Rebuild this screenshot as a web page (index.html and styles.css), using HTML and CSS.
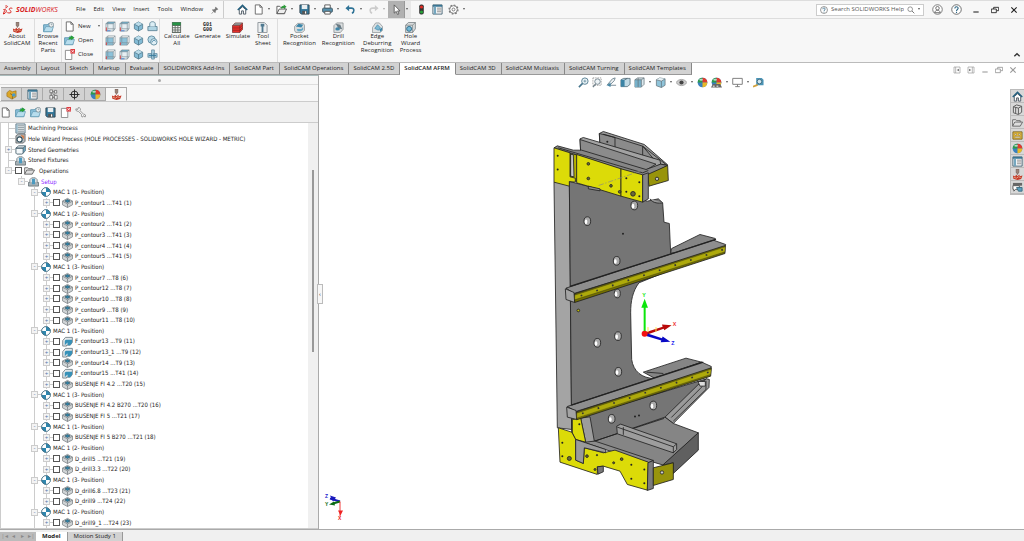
FILE: index.html
```html
<!DOCTYPE html>
<html lang="en">
<head>
  <meta charset="UTF-8">
  <title>SOLIDWORKS</title>
  <link rel="stylesheet" href="styles.css">
</head>
<body>
  <!-- icon set -->
  <svg class="defs" aria-hidden="true">
    <symbol id="home" viewBox="0 0 12 12"><path d="M2.5 6v5h2.500V7.500h2V11h2.500V6L6 3z" fill="#fff" stroke="#4a5660"/><path d="M.8 6.500L6 1.500l5.200 5" fill="none" stroke="#24607f" stroke-width="1.600"/></symbol>
    <symbol id="page" viewBox="0 0 12 12"><path d="M2.500 1h5l2.500 2.500V11H2.500z" fill="#fff" stroke="#666"/><path d="M7.500 1v2.500H10" fill="none" stroke="#666"/></symbol>
    <symbol id="open" viewBox="0 0 12 12"><path d="M1 10.500v-8h3l1 1.200h4.500V10.500z" fill="#fff" stroke="#555"/><path d="M1 10.500l2.500-5h8l-2.500 5z" fill="#eee" stroke="#555"/><path d="M5.500 5c0-2 1-3 3-3V.5L11.500 3 8.500 5.200V4C7 4 7 5 5.500 5z" fill="#2d9b3a"/></symbol>
    <symbol id="save" viewBox="0 0 12 12"><path d="M1 1h10v10H2.500L1 9.500z" fill="#34789b" stroke="#2f4450"/><path d="M3 1h6v4.500H3z" fill="#e9eef0"/><path d="M3.500 7.500h5V11h-5z" fill="#555"/><path d="M6.500 8h1.300v2.500H6.500z" fill="#fff"/></symbol>
    <symbol id="print" viewBox="0 0 12 12"><path d="M3 1h6v4H3z" fill="#fff" stroke="#555"/><rect x=".7" y="4.500" width="10.600" height="4.500" rx="1" fill="#5791ad" stroke="#3c5563"/><path d="M3 8h6v3H3z" fill="#fff" stroke="#555"/></symbol>
    <symbol id="undo" viewBox="0 0 12 12"><path d="M2 4.500h5c3.500 0 3.500 4.500.5 5.500" fill="none" stroke="currentColor" stroke-width="1.700"/><path d="M.5 4.500L4.500 1v7z" fill="currentColor"/></symbol>
    <symbol id="cursor" viewBox="0 0 12 12"><path d="M3.500 1v9l2.200-2 1.500 3.500 1.400-.7L7.200 7.500h2.600z" fill="#fff" stroke="#444" stroke-width=".8"/></symbol>
    <symbol id="light" viewBox="0 0 12 12"><rect x="3.500" y=".5" width="5" height="11" rx="2" fill="#333"/><circle cx="6" cy="3.300" r="1.700" fill="#e22b22"/><circle cx="6" cy="8.700" r="1.700" fill="#27a338"/></symbol>
    <symbol id="list" viewBox="0 0 12 12"><path d="M1 1h10v10H1z" fill="#fff" stroke="#446273"/><path d="M1 1h10v2H1z" fill="#397593"/><path d="M2 3h2.500v8H2z" fill="#75a7bf"/><path d="M5.500 4.500h4.500M5.500 6.500h4.500M5.500 8.500h4.500" stroke="#666" stroke-width=".8"/></symbol>
    <symbol id="gear" viewBox="0 0 12 12"><circle cx="6" cy="6" r="4.200" fill="#fff" stroke="#777"/><circle cx="6" cy="6" r="4.900" fill="none" stroke="#777" stroke-width="1.300" stroke-dasharray="1.900 1.900"/><circle cx="6" cy="6" r="1.600" fill="none" stroke="#777"/></symbol>
    <symbol id="search" viewBox="0 0 12 12"><circle cx="4.800" cy="4.800" r="3.500" fill="none" stroke="#666"/><path d="M7.500 7.500L11 11" stroke="#666" stroke-width="1.300"/></symbol>
    <symbol id="help" viewBox="0 0 12 12"><circle cx="6" cy="6" r="5.200" fill="#fff" stroke="#555" stroke-width=".9"/><path d="M4.200 4.800c0-2.400 3.600-2.300 3.600-.2C7.800 6 6 5.900 6 7.500M6 8.500v1.200" fill="none" stroke="#2d6583" stroke-width="1.200"/></symbol>
    <symbol id="user" viewBox="0 0 12 12"><circle cx="6" cy="6" r="5.200" fill="#fff" stroke="#666" stroke-width=".9"/><circle cx="6" cy="4.600" r="1.900" fill="none" stroke="#666"/><path d="M3 9.500c.3-3.500 5.700-3.500 6 0z" fill="none" stroke="#666"/></symbol>
    <symbol id="min" viewBox="0 0 12 12"><path d="M2 9h8" stroke="currentColor" stroke-width="1.600"/></symbol>
    <symbol id="restore" viewBox="0 0 12 12"><path d="M4 4.500V2h7.500v5H8.500M.5 4.500h7.500v5.500H.5z" fill="none" stroke="currentColor" stroke-width="1.300"/></symbol>
    <symbol id="close" viewBox="0 0 12 12"><path d="M2 2l8 8M10 2l-8 8" stroke="currentColor" stroke-width="1.700"/></symbol>
    <symbol id="dock" viewBox="0 0 12 12"><path d="M1.500 1.500h9v9h-9zM4 1.500v9" fill="none" stroke="#999"/><path d="M9 4v4L5.500 6z" fill="#777"/></symbol>
    <symbol id="pin" viewBox="0 0 12 12"><path d="M7 1l4 4-1 .8-1-.3-2 2 .2 2L6 10.500 1.500 6l1-1 2 .2 2-2L6.200 2z" fill="#777"/><path d="M4 8l-3 3.500" stroke="#777"/></symbol>
    <symbol id="cam" viewBox="0 0 12 12"><path d="M4.500 0h3v3.500L6 6 4.500 3.500z" fill="#9b8379" stroke="#5e4c46" stroke-width=".5"/><path d="M1 7l2.500 1.200L4.500 6 6 8l2-2 .5 1.800L11.500 7l-1.500 4-4 1-4.500-1.500z" fill="#c53827"/><path d="M2 9.200l3 .8 2-1.500 2.500.8" fill="none" stroke="#e8a487"/></symbol>
    <symbol id="folder" viewBox="0 0 12 12"><path d="M.7 10.500V3h4l1-1h4v8.500z" fill="#8fc5df" stroke="#5a93ae"/><path d="M.7 10.500L3 5h8.500l-2 5.500z" fill="#b7dded" stroke="#5a93ae" stroke-width=".7"/></symbol>
    <symbol id="recent" viewBox="0 0 12 12"><use href="#folder"/><circle cx="9" cy="3" r="2.600" fill="#eef3f5" stroke="#71838c" stroke-width=".8"/><path d="M9 1.500V3h1.300" fill="none" stroke="#71838c" stroke-width=".7"/></symbol>
    <symbol id="folderin" viewBox="0 0 12 12"><use href="#folder"/><path d="M5 5c0-2 1-3 2.500-3V.3L11.500 3 7.500 5.800V4.300C6.500 4.300 6 4.500 5 5z" fill="#29a039"/></symbol>
    <symbol id="pagex" viewBox="0 0 12 12"><path d="M1.500 1.500h7V11.500h-7z" fill="#fff" stroke="#888"/><path d="M7 0h5v5H7z" fill="#dd3d42"/><path d="M8.200 1.200l2.600 2.600M10.800 1.200L8.200 3.800" stroke="#fff" stroke-width=".8"/></symbol>
    <symbol id="pln" viewBox="0 0 12 12"><path d="M1 3L3 1h8v7.500L9 11H1z" fill="#e6eff3"/><path d="M1 3L3 1h8L9 3z" fill="#6eadc9"/><path d="M1 3h8v8H1zM1 3l2-2h8v7.500L9 11M9 3l2-2M3 1v7.500h8M3 8.500L1 11" fill="none" stroke="#7a8a93" stroke-width=".7"/><path d="M1.500 7v4" stroke="#d44"/><path d="M2 10.700h4" stroke="#477bcc"/></symbol>
    <symbol id="pln2" viewBox="0 0 12 12"><path d="M1 3h8v8H1z" fill="#8cc2da"/><path d="M1 3h8v8H1zM1 3l2-2h8v7.500L9 11M9 3l2-2M3 1v7.500h8M3 8.500L1 11" fill="none" stroke="#7a8a93" stroke-width=".7"/><path d="M1.500 8v3" stroke="#d44"/></symbol>
    <symbol id="iso" viewBox="0 0 12 12"><path d="M6 1l4.500 2.500v5L6 11 1.500 8.500v-5z" fill="#83bbd5" stroke="#4c7386" stroke-width=".8"/><path d="M1.500 3.500L6 6l4.500-2.500L6 1z" fill="#bbdcea"/><path d="M1.500 3.500L6 6l4.500-2.500M6 6v5" fill="none" stroke="#4c7386" stroke-width=".8"/></symbol>
    <symbol id="rot" viewBox="0 0 12 12"><circle cx="5" cy="5" r="4" fill="#b9dae8" stroke="#608da1"/><circle cx="7.500" cy="7.500" r="3.500" fill="#e2f0f6" stroke="#608da1"/><path d="M5.500 8c0-2 3-3 4-1" fill="none" stroke="#397b9c"/></symbol>
    <symbol id="norm" viewBox="0 0 12 12"><path d="M1 6h10v4.500H1z" fill="#b0d5e4" stroke="#60889a"/><path d="M3 6V3c0-3 6-3 6 0v3" fill="#dceef5" stroke="#60889a"/></symbol>
    <symbol id="link" viewBox="0 0 12 12"><path d="M1 5h4v4H1zM7 5h4v4H7zM5 1h3v10H5z" fill="#a6d0e2" stroke="#5a8399" stroke-width=".8"/><path d="M2 7h8" stroke="#34789b"/></symbol>
    <symbol id="calc" viewBox="0 0 12 12"><path d="M1 0h10v12H1z" fill="#646d66"/><path d="M1.500.5h9v3h-9z" fill="#279447"/><path d="M2 5h8M2 7.500h8M2 10h8" stroke="#fff" stroke-width="1.500" stroke-dasharray="2 1"/></symbol>
    <symbol id="sim" viewBox="0 0 12 12"><path d="M.5 4L3.500 1h8v7l-3 3.500h-8z" fill="#e8302c" stroke="#682623" stroke-width=".7"/><path d="M.5 4l3-3h8l-3 3z" fill="#8b8d8d"/><path d="M.5 4h8v7.500M8.500 4l3-3M.5 6.500h8l3-3M.5 9h8l3-3" fill="none" stroke="#791f1b" stroke-width=".6"/></symbol>
    <symbol id="sheet" viewBox="0 0 12 12"><path d="M1 .5h7l3 3v8H1z" fill="#eef0f1" stroke="#8c9499"/><path d="M4 2h4v3H7v6H5V5H4z" fill="#4f7990"/></symbol>
    <symbol id="pocket" viewBox="0 0 12 12"><path d="M.5 5L4 1.500h6l1.500 2V9L9 11.500H2L.5 9z" fill="#d9dcdd" stroke="#7d8588" stroke-width=".7"/><path d="M2 5l3-3 5 1-2 3z" fill="#3b86aa"/><path d="M3 7.500h5l2-2v3L7.500 10H4z" fill="#67a9c6"/></symbol>
    <symbol id="edge" viewBox="0 0 12 12"><path d="M.5 6L4 1h4l3.500 4v4L9 11.500H.5z" fill="#dfe2e3" stroke="#7d8588" stroke-width=".7"/><path d="M3 7l3-4 3 3-2 3z" fill="#7fb9d2" stroke="#3b86aa" stroke-width=".7"/><path d="M8 8l3-2v3l-2 2z" fill="#3b86aa"/></symbol>
    <symbol id="drill" viewBox="0 0 12 12"><path d="M1 4l3-3h7v7l-3 3.500H1z" fill="#dcdfe0" stroke="#80888b" stroke-width=".8"/><path d="M3 2l5 1 2 5-4-1z" fill="#697a83"/><ellipse cx="5" cy="7.500" rx="2.500" ry="1.700" fill="#4186a7"/></symbol>
    <symbol id="hole" viewBox="0 0 12 12"><path d="M.7 3.500l3-3h7.600v7l-3 4H.7z" fill="#d9dcdd" stroke="#6c7579" stroke-width=".8"/><path d="M.7 3.500h7.600v8M8.300 3.500l3-3" fill="none" stroke="#6c7579" stroke-width=".7"/><circle cx="4.500" cy="7.500" r="2.700" fill="#73b8d5" stroke="#2c6989"/></symbol>
    <symbol id="part" viewBox="0 0 12 12"><path d="M1 4l3-2.500 3 1.500 4-1v6.500L6.500 11 1 8z" fill="#dca728" stroke="#99701f" stroke-width=".7"/><path d="M4.500 5l2.500 1.500V11" fill="none" stroke="#8d681f"/><circle cx="8.500" cy="6.500" r="2" fill="#4a9aca"/></symbol>
    <symbol id="conf" viewBox="0 0 12 12"><path d="M2 1h3v3H2zM2 7h3v4H2zM7 1.500h2.500v3H7zM7 7h3v4H7z" fill="#eee" stroke="#666" stroke-width=".8"/><path d="M5 3h2M5 9h2M3.500 4v3M5 5l3 2" stroke="#555" stroke-width=".8"/></symbol>
    <symbol id="target" viewBox="0 0 12 12"><circle cx="6" cy="6" r="3.700" fill="none" stroke="#222"/><path d="M6 .5v11M.5 6h11" stroke="#222"/></symbol>
    <symbol id="ball" viewBox="0 0 12 12"><circle cx="6" cy="6" r="5.300" fill="#3a81bd"/><path d="M6 6V.7A5.300 5.300 0 0 0 .7 6z" fill="#2c9a4b"/><path d="M6 6V.7A5.300 5.300 0 0 1 11.300 6z" fill="#df3b2e"/><path d="M6 6h5.300A5.300 5.300 0 0 1 6 11.300z" fill="#e8b927"/><ellipse cx="4.500" cy="3" rx="2" ry="1.200" fill="#fff" opacity=".65"/></symbol>
    <symbol id="scene" viewBox="0 0 12 12"><use href="#ball"/><path d="M0 11.500l2-4h8l2 4z" fill="#666"/><path d="M2 10h8" stroke="#fff" stroke-dasharray="2 2"/></symbol>
    <symbol id="wrench" viewBox="0 0 12 12"><path d="M1 2l2 .7.500-2C6 .5 6.500 2.500 5.500 4l4 4c2-.5 2.500 1.500 1.500 3L9.200 9.500l-1 1.500C6.500 10.500 7 9 7.500 8.500l-4-4C2 5 .5 4 1 2z" fill="#f7f7f7" stroke="#777" stroke-width=".8"/></symbol>
    <symbol id="process" viewBox="0 0 12 12"><path d="M1 1h10v10H1z" fill="#e1e7ea" stroke="#5f7987"/><path d="M3 3h7M3 5h7M3 7h7M3 9h7" stroke="#8d999f"/><path d="M2.200 2v8" stroke="#74abc5"/></symbol>
    <symbol id="wizard" viewBox="0 0 12 12"><path d="M1 3l3-2h7v8l-2 2H1z" fill="#b3bcc0" stroke="#555" stroke-width=".8"/><circle cx="5" cy="7" r="2.800" fill="#fff" stroke="#2c4956" stroke-width="1.200"/><path d="M6 2l4 1v4L8 5z" fill="#d48150"/></symbol>
    <symbol id="geom" viewBox="0 0 12 12"><path d="M1 4.500L4 2h7.500L9 4.500zM1 4.500h8V10L7.500 11H2L1 10z" fill="#f4f8fa" stroke="#4e6672"/><path d="M9 4.500L11.500 2v5L9 10z" fill="#6da7c1" stroke="#4e6672" stroke-width=".7"/></symbol>
    <symbol id="fix" viewBox="0 0 12 12"><path d="M.5 7h11v4H.5z" fill="#a6b1b6" stroke="#5c686e" stroke-width=".8"/><path d="M2 7V4l2-2h4l2 2v3" fill="#dfe4e6" stroke="#5c686e" stroke-width=".8"/><path d="M4.300 3h3.400v6H4.300z" fill="#4b9ac0"/></symbol>
    <symbol id="ofolder" viewBox="0 0 12 12"><path d="M.7 10V3h3.500l1 1H9v2" fill="#eee" stroke="#666"/><path d="M.7 10l2.300-4.500h8.500L9 10z" fill="#ddd" stroke="#666"/></symbol>
    <symbol id="mac" viewBox="0 0 12 12"><circle cx="6" cy="6" r="5.200" fill="#fff" stroke="#457186" stroke-width=".9"/><path d="M6 6V.8A5.200 5.200 0 0 0 .8 6zM6 6h5.200A5.200 5.200 0 0 1 6 11.200z" fill="#fff"/><path d="M6 6V.8A5.200 5.200 0 0 1 11.200 6zM6 6H.8A5.200 5.200 0 0 0 6 11.200z" fill="#2f86ad"/><circle cx="6" cy="6" r="5.200" fill="none" stroke="#457186" stroke-width=".9"/></symbol>
    <symbol id="op" viewBox="0 0 12 12"><path d="M.5 4.500L6 1.500l5.500 3v4L6 11.500l-5.500-3z" fill="#d0d4d6" stroke="#747c80" stroke-width=".8"/><path d="M.5 4.500L6 7.500l5.500-3M6 7.500v4" fill="none" stroke="#747c80" stroke-width=".8"/><path d="M3.200 4.300L6 2.800l2.800 1.500L6 6z" fill="#2d83a9" stroke="#33586a" stroke-width=".8"/></symbol>
    <symbol id="face" viewBox="0 0 12 12"><path d="M.8 11V5l3-3.500h7.500V7L9 10H5v1z" fill="#e4e8ea" stroke="#5b6b73" stroke-width=".8"/><path d="M3 10V6c0-2 1.500-2 3-2h5v3L9 10H6V7L3 10z" fill="#3691b8"/></symbol>
    <symbol id="area" viewBox="0 0 12 12"><path d="M1 1h9v8H1z" fill="none" stroke="#999" stroke-dasharray="1.500 1"/><circle cx="6" cy="5" r="3" fill="#edf3f6" stroke="#71828b"/><path d="M4 7.500L1 11" stroke="#71828b" stroke-width="1.500"/></symbol>
    <symbol id="zoomfit" viewBox="0 0 12 12"><circle cx="7.500" cy="4.500" r="3.500" fill="#e9f3f7" stroke="#557d91"/><path d="M5 7L1 11" stroke="#47768e" stroke-width="1.800"/><path d="M6 4.500h3M7.500 3v3" stroke="#557d91" stroke-width=".7"/></symbol>
    <symbol id="prev" viewBox="0 0 12 12"><path d="M1 9l6-7 3-1-1 3-5 5h7" fill="#edf1f3" stroke="#718590"/><path d="M1 9l4-3v5z" fill="#4686a5"/></symbol>
    <symbol id="section" viewBox="0 0 12 12"><path d="M1 3l3-1.500h7V8L8 10.500H1z" fill="#bfd9e4" stroke="#47616e" stroke-width=".8"/><path d="M1 3h4v7.500H1z" fill="#3b83a5"/><path d="M5 3l3-1.500" stroke="#47616e"/></symbol>
    <symbol id="cube" viewBox="0 0 12 12"><path d="M1 3l3-2h7v7l-3 3H1z" fill="#dce9ee" stroke="#64737a" stroke-width=".8"/><path d="M1 3h7v8H1z" fill="#78b1ca"/><path d="M1 3h7v8M8 3l3-2M4.500 1v10" fill="none" stroke="#64737a" stroke-width=".8"/></symbol>
    <symbol id="style" viewBox="0 0 12 12"><path d="M1.500 3L5 1l6 1v7l-4 2.500-5.500-2z" fill="#8fc4da" stroke="#64737a" stroke-width=".8"/><path d="M1.500 3L7 4.500l4-2.500L5 1z" fill="#e8f2f6"/><path d="M1.500 3L7 4.500v7M7 4.500L11 2" fill="none" stroke="#64737a" stroke-width=".8"/></symbol>
    <symbol id="eye" viewBox="0 0 12 12"><path d="M0 6c3-4.500 9-4.500 12 0-3 4.500-9 4.500-12 0z" fill="#ccc" stroke="#888" stroke-width=".7"/><circle cx="6" cy="6" r="2.300" fill="#444"/></symbol>
    <symbol id="monitor" viewBox="0 0 12 12"><path d="M.8 1.500h10.400v6.500H.8zM6 8v2.500M3.500 10.500h5" fill="#fff" stroke="#777"/></symbol>
    <symbol id="tape" viewBox="0 0 12 12"><path d="M3.500 1h6l2 2v6h-8z" fill="#4a94b6"/><circle cx="7" cy="5" r="2.500" fill="#d2e7ef" stroke="#41697c"/><path d="M0 10.500l5-2" stroke="#d2a23e" stroke-width="2"/></symbol>
    <symbol id="box" viewBox="0 0 12 12"><path d="M1.500 3L5 1l5.500 1.500V9L7 11.500 1.500 9.500z" fill="#ddd" stroke="#555"/><path d="M1.500 3L7 4.500V11M7 4.500l3.500-2M4 3.500V10" fill="none" stroke="#555"/></symbol>
    <symbol id="palette" viewBox="0 0 12 12"><path d="M1 2h10v8H1z" fill="#e9bd3a" stroke="#7d682b"/><path d="M3 4h2v1.500H3zM7 4h2v1.500H7zM3 7h6v1.500H3z" fill="#fff" stroke="#6d5d2b" stroke-width=".5"/></symbol>
    <symbol id="forum" viewBox="0 0 12 12"><path d="M1 1h10v3H1z" fill="#666"/><path d="M1 4h7v4H4l-2 2V8H1z" fill="#fff" stroke="#555"/><path d="M5 6h6v4H7z" fill="#5ba0bf" stroke="#3c6b80"/></symbol>
  </svg>

  <header class="titlebar">
    <div class="brand">
      <svg class="brand-mark" viewBox="0 0 30 30"><path d="M7 3c8-2 9 4 0 6M1 14c10-4 14 9 0 13l4-11" fill="none" stroke="#d8231f" stroke-width="3"/><path d="M28 10c-9-3-12 3-6 7s1 9-9 6" fill="none" stroke="#d8231f" stroke-width="3"/></svg>
      <span class="brand-name"><b>SOLID</b>WORKS</span>
    </div>
    <nav class="menu">
      <a href="#">File</a><a href="#">Edit</a><a href="#">View</a><a href="#">Insert</a><a href="#">Tools</a><a href="#">Window</a>
      <button aria-label="Pin menu"><svg class="i8"><use href="#pin"/></svg></button>
    </nav>
    <div class="quick">
      <button class="single" aria-label="Home"><svg class="i11"><use href="#home"/></svg></button>
      <button class="split" aria-label="New"><svg class="i11"><use href="#page"/></svg><i class="caret"></i></button>
      <button class="split" aria-label="Open"><svg class="i11"><use href="#open"/></svg><i class="caret"></i></button>
      <button class="split" aria-label="Save"><svg class="i11"><use href="#save"/></svg><i class="caret"></i></button>
      <button class="split" aria-label="Print"><svg class="i11"><use href="#print"/></svg><i class="caret"></i></button>
      <button class="split undo" aria-label="Undo"><svg class="i11"><use href="#undo"/></svg><i class="caret"></i></button>
      <button class="split redo" aria-label="Redo"><svg class="i11 flip"><use href="#undo"/></svg><i class="caret"></i></button>
      <button class="split active" aria-label="Select"><svg class="i11"><use href="#cursor"/></svg><i class="caret"></i></button>
      <button class="single" aria-label="Rebuild"><svg class="i11"><use href="#light"/></svg></button>
      <button class="single" aria-label="File properties"><svg class="i11"><use href="#list"/></svg></button>
      <button class="split" aria-label="Options"><svg class="i11"><use href="#gear"/></svg><i class="caret"></i></button>
    </div>
    <div class="window-tools">
      <label class="search"><svg class="i8"><use href="#help"/></svg><input type="text" aria-label="Search help" placeholder="Search SOLIDWORKS Help"><svg class="i8"><use href="#search"/></svg><i class="caret"></i></label>
      <button aria-label="Account"><svg class="i11"><use href="#user"/></svg></button>
      <button aria-label="Help"><svg class="i11"><use href="#help"/></svg></button>
      <button aria-label="Minimize"><svg class="i8"><use href="#min"/></svg></button>
      <button aria-label="Restore"><svg class="i8"><use href="#restore"/></svg></button>
      <button aria-label="Close"><svg class="i8"><use href="#close"/></svg></button>
    </div>
  </header>

  <section class="ribbon">
    <div class="group"><button class="cmd about"><svg class="i11"><use href="#cam"/></svg>About<br>SolidCAM</button></div>
    <div class="group"><button class="cmd browse"><svg class="i11"><use href="#recent"/></svg>Browse<br>Recent<br>Parts</button></div>
    <div class="group files">
      <button><svg class="i11"><use href="#page"/></svg>New<i class="caret"></i></button>
      <button><svg class="i11"><use href="#folderin"/></svg>Open</button>
      <button><svg class="i11"><use href="#pagex"/></svg>Close</button>
    </div>
    <div class="group views">
      <button aria-label="Front"><svg class="i11"><use href="#pln"/></svg></button><button aria-label="Back"><svg class="i11"><use href="#pln"/></svg></button><button aria-label="Isometric"><svg class="i11"><use href="#iso"/></svg></button><button aria-label="Normal to"><svg class="i11"><use href="#norm"/></svg></button>
      <button aria-label="Left"><svg class="i11"><use href="#pln2"/></svg></button><button aria-label="Right"><svg class="i11"><use href="#pln2"/></svg></button><button aria-label="Trimetric"><svg class="i11"><use href="#iso"/></svg></button><button aria-label="Rotate"><svg class="i11"><use href="#rot"/></svg></button>
      <button aria-label="Top"><svg class="i11"><use href="#pln2"/></svg></button><button aria-label="Bottom"><svg class="i11"><use href="#pln"/></svg></button><button aria-label="Dimetric"><svg class="i11"><use href="#iso"/></svg></button><button aria-label="Link views"><svg class="i11"><use href="#link"/></svg></button>
    </div>
    <div class="group solids">
      <button class="cmd"><svg class="i11"><use href="#calc"/></svg>Calculate<br>All</button>
      <button class="cmd"><span class="gcode">G01<br>G00</span>Generate</button>
      <button class="cmd"><svg class="i11"><use href="#sim"/></svg>Simulate</button>
      <button class="cmd"><svg class="i11"><use href="#sheet"/></svg>Tool<br>Sheet</button>
    </div>
    <div class="group recog">
      <button class="cmd"><svg class="i11"><use href="#pocket"/></svg>Pocket<br>Recognition</button>
      <button class="cmd"><svg class="i11"><use href="#drill"/></svg>Drill<br>Recognition</button>
      <button class="cmd"><svg class="i11"><use href="#edge"/></svg>Edge<br>Deburring<br>Recognition</button>
      <button class="cmd"><svg class="i11"><use href="#hole"/></svg>Hole<br>Wizard<br>Process</button>
    </div>
    <button class="collapse" aria-label="Collapse ribbon"><svg class="i8" viewBox="0 0 12 12"><path d="M2 8l4-4 4 4" fill="none" stroke="#333" stroke-width="2"/></svg></button>
  </section>

  <div class="tabrow">
    <nav class="tabs">
      <a href="#">Assembly</a><a href="#">Layout</a><a href="#">Sketch</a><a href="#">Markup</a><a href="#">Evaluate</a><a href="#">SOLIDWORKS Add-Ins</a><a href="#">SolidCAM Part</a><a href="#">SolidCAM Operations</a><a href="#">SolidCAM 2.5D</a><a href="#" class="on">SolidCAM AFRM</a><a href="#">SolidCAM 3D</a><a href="#">SolidCAM Multiaxis</a><a href="#">SolidCAM Turning</a><a href="#">SolidCAM Templates</a>
    </nav>
    <div class="doc-tools">
      <button aria-label="Dock left"><svg class="i8"><use href="#dock"/></svg></button>
      <button aria-label="Dock right"><svg class="i8 flip"><use href="#dock"/></svg></button>
      <button aria-label="Minimize document"><svg class="i8"><use href="#min"/></svg></button>
      <button aria-label="Restore document"><svg class="i8"><use href="#restore"/></svg></button>
      <button aria-label="Close document"><svg class="i8"><use href="#close"/></svg></button>
    </div>
  </div>

  <main class="work">
    <aside class="panel">
      <div class="grip"><i></i></div>
      <div class="manager-tabs">
        <button aria-label="Feature tree"><svg class="i11"><use href="#part"/></svg></button><button aria-label="Properties"><svg class="i11"><use href="#list"/></svg></button><button aria-label="Configurations"><svg class="i11"><use href="#conf"/></svg></button><button aria-label="Dimensions"><svg class="i11"><use href="#target"/></svg></button><button aria-label="Display"><svg class="i11"><use href="#ball"/></svg></button><button class="on" aria-label="SolidCAM"><svg class="i11"><use href="#cam"/></svg></button>
      </div>
      <div class="panel-tools">
        <button aria-label="New"><svg class="i11"><use href="#page"/></svg></button>
        <button aria-label="Open"><svg class="i11"><use href="#folderin"/></svg></button>
        <button aria-label="Recent"><svg class="i11"><use href="#recent"/></svg></button>
        <button aria-label="Save"><svg class="i11"><use href="#save"/></svg></button>
        <button aria-label="Close"><svg class="i11"><use href="#pagex"/></svg></button>
        <button aria-label="Settings"><svg class="i11"><use href="#wrench"/></svg></button>
      </div>
      <div class="tree-wrap">
        <ul class="tree">
          <li class="root"><span class="leg"></span><svg class="i11"><use href="#process"/></svg>Machining Process</li>
          <li class="root"><span class="leg"></span><svg class="i11"><use href="#wizard"/></svg>Hole Wizard Process (HOLE PROCESSES - SOLIDWORKS HOLE WIZARD - METRIC)</li>
          <li class="root"><button class="tog" aria-label="Expand">+</button><svg class="i11"><use href="#geom"/></svg>Stored Geometries</li>
          <li class="root"><span class="leg"></span><svg class="i11"><use href="#fix"/></svg>Stored Fixtures</li>
          <li class="root last"><button class="tog" aria-label="Collapse">-</button><label><input type="checkbox"><svg class="i11"><use href="#ofolder"/></svg><span class="folder-name">Operations</span></label></li>
          <li class="setup"><button class="tog" aria-label="Collapse">-</button><svg class="i11"><use href="#fix"/></svg><span class="purple">Setup</span></li>
          <li class="mac"><button class="tog" aria-label="Collapse">-</button><svg class="i10"><use href="#mac"/></svg>MAC 1 (1- Position)</li>
          <li class="op"><button class="tog" aria-label="Expand">+</button><label><input type="checkbox"><svg class="i11"><use href="#op"/></svg>P_contour1 ...T41 (1)</label></li>
          <li class="mac"><button class="tog" aria-label="Collapse">-</button><svg class="i10"><use href="#mac"/></svg>MAC 1 (2- Position)</li>
          <li class="op"><button class="tog" aria-label="Expand">+</button><label><input type="checkbox"><svg class="i11"><use href="#op"/></svg>P_contour2 ...T41 (2)</label></li>
          <li class="op"><button class="tog" aria-label="Expand">+</button><label><input type="checkbox"><svg class="i11"><use href="#op"/></svg>P_contour3 ...T41 (3)</label></li>
          <li class="op"><button class="tog" aria-label="Expand">+</button><label><input type="checkbox"><svg class="i11"><use href="#op"/></svg>P_contour4 ...T41 (4)</label></li>
          <li class="op"><button class="tog" aria-label="Expand">+</button><label><input type="checkbox"><svg class="i11"><use href="#op"/></svg>P_contour5 ...T41 (5)</label></li>
          <li class="mac"><button class="tog" aria-label="Collapse">-</button><svg class="i10"><use href="#mac"/></svg>MAC 1 (3- Position)</li>
          <li class="op"><button class="tog" aria-label="Expand">+</button><label><input type="checkbox"><svg class="i11"><use href="#op"/></svg>P_contour7 ...T8 (6)</label></li>
          <li class="op"><button class="tog" aria-label="Expand">+</button><label><input type="checkbox"><svg class="i11"><use href="#op"/></svg>P_contour12 ...T8 (7)</label></li>
          <li class="op"><button class="tog" aria-label="Expand">+</button><label><input type="checkbox"><svg class="i11"><use href="#op"/></svg>P_contour10 ...T8 (8)</label></li>
          <li class="op"><button class="tog" aria-label="Expand">+</button><label><input type="checkbox"><svg class="i11"><use href="#op"/></svg>P_contour9 ...T8 (9)</label></li>
          <li class="op"><button class="tog" aria-label="Expand">+</button><label><input type="checkbox"><svg class="i11"><use href="#op"/></svg>P_contour11 ...T8 (10)</label></li>
          <li class="mac"><button class="tog" aria-label="Collapse">-</button><svg class="i10"><use href="#mac"/></svg>MAC 1 (1- Position)</li>
          <li class="op"><button class="tog" aria-label="Expand">+</button><label><input type="checkbox"><svg class="i11"><use href="#face"/></svg>F_contour13 ...T9 (11)</label></li>
          <li class="op"><button class="tog" aria-label="Expand">+</button><label><input type="checkbox"><svg class="i11"><use href="#face"/></svg>F_contour13_1 ...T9 (12)</label></li>
          <li class="op"><button class="tog" aria-label="Expand">+</button><label><input type="checkbox"><svg class="i11"><use href="#op"/></svg>P_contour14 ...T9 (13)</label></li>
          <li class="op"><button class="tog" aria-label="Expand">+</button><label><input type="checkbox"><svg class="i11"><use href="#face"/></svg>F_contour15 ...T41 (14)</label></li>
          <li class="op"><button class="tog" aria-label="Expand">+</button><label><input type="checkbox"><svg class="i11"><use href="#op"/></svg>BUSENJE FI 4.2 ...T20 (15)</label></li>
          <li class="mac"><button class="tog" aria-label="Collapse">-</button><svg class="i10"><use href="#mac"/></svg>MAC 1 (3- Position)</li>
          <li class="op"><button class="tog" aria-label="Expand">+</button><label><input type="checkbox"><svg class="i11"><use href="#op"/></svg>BUSENJE FI 4.2 B270 ...T20 (16)</label></li>
          <li class="op"><button class="tog" aria-label="Expand">+</button><label><input type="checkbox"><svg class="i11"><use href="#op"/></svg>BUSENJE FI 5 ...T21 (17)</label></li>
          <li class="mac"><button class="tog" aria-label="Collapse">-</button><svg class="i10"><use href="#mac"/></svg>MAC 1 (1- Position)</li>
          <li class="op"><button class="tog" aria-label="Expand">+</button><label><input type="checkbox"><svg class="i11"><use href="#op"/></svg>BUSENJE FI 5 B270 ...T21 (18)</label></li>
          <li class="mac"><button class="tog" aria-label="Collapse">-</button><svg class="i10"><use href="#mac"/></svg>MAC 1 (2- Position)</li>
          <li class="op"><button class="tog" aria-label="Expand">+</button><label><input type="checkbox"><svg class="i11"><use href="#op"/></svg>D_drill5 ...T21 (19)</label></li>
          <li class="op"><button class="tog" aria-label="Expand">+</button><label><input type="checkbox"><svg class="i11"><use href="#op"/></svg>D_drill3.3 ...T22 (20)</label></li>
          <li class="mac"><button class="tog" aria-label="Collapse">-</button><svg class="i10"><use href="#mac"/></svg>MAC 1 (3- Position)</li>
          <li class="op"><button class="tog" aria-label="Expand">+</button><label><input type="checkbox"><svg class="i11"><use href="#op"/></svg>D_drill6.8 ...T23 (21)</label></li>
          <li class="op"><button class="tog" aria-label="Expand">+</button><label><input type="checkbox"><svg class="i11"><use href="#op"/></svg>D_drill9 ...T24 (22)</label></li>
          <li class="mac"><button class="tog" aria-label="Collapse">-</button><svg class="i10"><use href="#mac"/></svg>MAC 1 (2- Position)</li>
          <li class="op"><button class="tog" aria-label="Expand">+</button><label><input type="checkbox"><svg class="i11"><use href="#op"/></svg>D_drill9_1 ...T24 (23)</label></li>
        </ul>
        <div class="scroll"><i></i></div>
      </div>
      <button class="splitter" aria-label="Collapse panel">‹</button>
    </aside>

    <section class="viewport">
      <svg class="model" viewBox="319 76 705 453">
        <g transform="translate(540 120) scale(.3333)" stroke="#222" stroke-width="2.500" stroke-linejoin="round">
          <!-- column -->
          <path d="M42 188L88 186 95 930 52 925z" fill="#a4a4a4"/>
          <path d="M88 186L322 245 355 238 368 250 372 308 388 312 392 400 420 440 297 490C278 515 272 545 272 580L275 720C280 755 305 777 345 777L400 850 95 940z" fill="#757575"/>
          <path d="M330 238c8 14 28 14 38 12" fill="#999"/>
          <!-- upper bracket -->
          <path d="M178 42L190 36 313 75 383 136 352 134 305 122 180 80z" fill="#9b9b9b"/>
          <path d="M178 42L225 54 308 80 345 123 310 118 180 78z" fill="#8b8b8b"/>
          <path d="M190 44L225 54V88M308 80V113M308 80l70 55" fill="none"/>
          <path d="M120 58L130 54 360 122 362 134 320 155 122 100z" fill="#a2a2a2"/>
          <path d="M120 60L348 134 318 152 122 97z" fill="#8b8b8b"/>
          <path d="M42 85L52 79 100 92 125 92 318 150 362 134 383 138 325 168 308 168 240 148 100 103z" fill="#868686"/>
          <path d="M55 85L308 160 325 153" fill="none"/>
          <path d="M323 165L383 138 385 183 327 200z" fill="#98940b"/>
          <path d="M90 102L110 106V187L90 172z" fill="#b4b000"/>
          <path d="M92 104L100 106 102 172 92 170z" fill="#c9c9c9"/>
          <path d="M42 85L90 100V172L106 176V188L88 186V200L42 188z" fill="#dcdb08"/>
          <path d="M110 105L243 148V230L178 210 110 190z" fill="#dcdb08"/>
          <path d="M243 148L308 166V248L243 230z" fill="#dcdb08"/>
          <path d="M308 166L325 160V238L308 248z" fill="#868686"/>
          <path d="M145 200l35 8v6l-35-6z" fill="#8e8e8e"/>
          <path d="M176 198L300 155" stroke="#888" stroke-dasharray="16 5 4 5" stroke-width="2"/>
          <!-- upper rail -->
          <path d="M392 400L395 387 480 345 526 357 520 366 410 402z" fill="#858585"/>
          <path d="M78 506L520 362 557 375 555 382 102 522z" fill="#8e8e8e"/>
          <path d="M90 501L528 360" stroke-width="4"/>
          <path d="M76 508L102 519 104 549 78 540z" fill="#a4a4a4"/>
          <path d="M104 523L556 378 555 402 104 549z" fill="#747000"/>
          <path d="M104 527L556 382 555 397 104 541z" fill="#aeaa0b" stroke-width="1"/>
          <path d="M122 529L550 390" stroke="#333" stroke-width="5" stroke-dasharray="5 44.300"/>
          <!-- web and strut -->
          <path d="M130 890L500 778 380 895 160 967z" fill="#757575"/>
          <path d="M375 893L474 796 500 778 508 780 507 804 400 912z" fill="#9a9a9a"/>
          <path d="M394 894L486 802 488 784M400 905L498 810V784" fill="none"/>
          <path d="M474 786h22v14h-16z" fill="#ddd"/>
          <!-- base -->
          <path d="M140 965L165 965 375 893 400 912 475 940 370 1037 340 1028z" fill="#858585"/>
          <path d="M475 940V992L400 1062V1030L368 1037z" fill="#606060"/>
          <path d="M163 965L372 897" fill="none"/>
          <path d="M230 920L242 914 410 973V990L400 1000 232 943z" fill="#9d9d9d"/>
          <path d="M232 923L400 982 410 973M400 982V1000M250 923V946" fill="none"/>
          <path d="M107 960L165 965 340 1023 325 1030 195 990z" fill="#8c8c8c"/>
          <path d="M122 896L150 892 163 965 137 968z" fill="#9c9c9c"/>
          <path d="M97 900L122 896 137 968 107 960 97 940z" fill="#dcdb08"/>
          <path d="M55 925L95 938 107 960V1022L130 1032 133 985 190 1000 225 992 325 1028 322 1112 262 1095 240 1055 190 1040 172 1042V1065L60 1028z" fill="#dcdb08"/>
          <path d="M107 960L197 990V1000L133 985 130 1032 107 1022z" fill="#9a9a9a"/>
          <path d="M172 1042L190 1040V1057L174 1064z" fill="#777"/>
          <path d="M324 1030L340 1023V1107L322 1113z" fill="#7c7c7c"/>
          <path d="M340 1045L400 1030V1080L340 1098z" fill="#98940b"/>
          <!-- lower rail -->
          <path d="M310 758L438 716 485 728 345 777z" fill="#858585"/>
          <path d="M320 758l50 4" fill="none"/>
          <path d="M82 861L485 728 514 741 512 749 108 876z" fill="#8e8e8e"/>
          <path d="M94 857L490 728" stroke-width="4"/>
          <path d="M80 863L108 873 110 900 82 893z" fill="#a4a4a4"/>
          <path d="M110 877L514 745 512 770 110 901z" fill="#747000"/>
          <path d="M110 881L514 749 512 765 110 896z" fill="#aeaa0b" stroke-width="1"/>
          <path d="M126 882L506 758" stroke="#333" stroke-width="5" stroke-dasharray="5 44.300"/>
          <!-- bores -->
          <g fill="#a9a9a9">
            <ellipse cx="142" cy="305" rx="10" ry="13"/><ellipse cx="283" cy="258" rx="10" ry="13"/><ellipse cx="230" cy="424" rx="10" ry="13"/><ellipse cx="232" cy="522" rx="9" ry="13"/><ellipse cx="172" cy="670" rx="10" ry="13"/><ellipse cx="234" cy="650" rx="10" ry="13"/><ellipse cx="235" cy="757" rx="10" ry="13"/><ellipse cx="340" cy="858" rx="10" ry="13"/><ellipse cx="215" cy="898" rx="10" ry="13"/>
          </g>
          <g fill="#fff" stroke="none">
            <ellipse cx="138" cy="307" rx="4" ry="7"/><ellipse cx="279" cy="260" rx="4" ry="7"/><ellipse cx="226" cy="426" rx="4" ry="7"/><ellipse cx="228" cy="524" rx="4" ry="7"/><ellipse cx="168" cy="672" rx="4" ry="7"/><ellipse cx="230" cy="652" rx="4" ry="7"/><ellipse cx="231" cy="759" rx="4" ry="7"/><ellipse cx="336" cy="860" rx="4" ry="7"/><ellipse cx="211" cy="900" rx="4" ry="7"/>
          </g>
          <g fill="#6a6a38">
            <circle cx="145" cy="133" r="4"/><circle cx="145" cy="177" r="4"/><circle cx="213" cy="199" r="4"/><circle cx="239" cy="217" r="4"/><circle cx="279" cy="223" r="7"/><circle cx="351" cy="178" r="5" fill="#ccc"/><circle cx="88" cy="1017" r="6"/><circle cx="141" cy="1010" r="4"/><circle cx="245" cy="1019" r="4"/><circle cx="366" cy="1059" r="5" fill="#ccc"/><circle cx="221" cy="1030" r="3"/><circle cx="165" cy="1050" r="3"/><circle cx="171" cy="1007" r="2"/><circle cx="115" cy="573" r="4" fill="#c2be0b"/>
          </g>
          <g fill="#222" stroke="none">
            <circle cx="53" cy="109" r="3"/><circle cx="53" cy="150" r="3"/><circle cx="259" cy="176" r="3"/><circle cx="298" cy="188" r="3"/><circle cx="259" cy="217" r="3"/><circle cx="298" cy="230" r="3"/><circle cx="202" cy="67" r="3"/><circle cx="249" cy="343" r="3"/><circle cx="67" cy="970" r="3"/><circle cx="67" cy="1010" r="3"/><circle cx="118" cy="914" r="3"/><circle cx="274" cy="1036" r="3"/><circle cx="313" cy="1050" r="3"/><circle cx="274" cy="1078" r="3"/><circle cx="313" cy="1091" r="3"/><circle cx="285" cy="891" r="3"/><circle cx="297" cy="888" r="3"/>
          </g>
          <!-- origin axes -->
          <g stroke="none">
            <path d="M311 643V565h-7L314 538l10 27h-7V643z" fill="#0ce60c"/>
            <path d="M314 639L368 622 366 615 395 617 373 632 371 628 316 647z" fill="#b90a0a"/>
            <path d="M314 639L366 656 368 651 391 667 362 668 364 663 314 648z" fill="#0909c5"/>
            <circle cx="314" cy="643" r="9" fill="#f21010"/>
            <path d="M324 623v15M348 623v14" stroke="#ffe84a" stroke-width="3"/>
            <text class="axis" x="307" y="533" fill="#0ce60c">Y</text><text class="axis" x="398" y="621" fill="#e33">X</text><text class="axis" x="394" y="678" fill="#22e">Z</text>
          </g>
        </g>
        <!-- view triad -->
        <path d="M340 502L330 499" stroke="#1919bd" stroke-width="2"/><path d="M330 496l6 2-3 4z" fill="#1919bd"/>
        <path d="M340 502L333 504" stroke="#0a6b14" stroke-width="2"/><path d="M329 505l5-3 1 4z" fill="#0a6b14"/>
        <path d="M340 502v15" stroke="#f13a3a"/><path d="M338 511h5l-2.500 5z" fill="#e22"/>
        <text class="axis-sm" x="325" y="498" fill="#22c">Z</text><text class="axis-sm" x="325" y="506" fill="#0a6b14">Y</text><text class="axis-sm" x="338" y="520" fill="#e22">X</text>
      </svg>
      <div class="hud">
        <button aria-label="Zoom to fit"><svg class="i11"><use href="#zoomfit"/></svg></button>
        <button aria-label="Zoom to area"><svg class="i11"><use href="#area"/></svg></button>
        <button aria-label="Previous view"><svg class="i11"><use href="#prev"/></svg></button>
        <button aria-label="Section view"><svg class="i11"><use href="#section"/></svg></button>
        <button class="drop" aria-label="View orientation"><svg class="i11"><use href="#cube"/></svg><i class="caret"></i></button>
        <button class="drop" aria-label="Display style"><svg class="i11"><use href="#style"/></svg><i class="caret"></i></button>
        <button class="drop" aria-label="Hide or show"><svg class="i11"><use href="#eye"/></svg><i class="caret"></i></button>
        <button aria-label="Appearance"><svg class="i11"><use href="#ball"/></svg></button>
        <button class="drop" aria-label="Scene"><svg class="i11"><use href="#scene"/></svg><i class="caret"></i></button>
        <button class="drop" aria-label="View settings"><svg class="i11"><use href="#monitor"/></svg><i class="caret"></i></button>
        <button aria-label="Measure"><svg class="i11"><use href="#tape"/></svg></button>
      </div>
      <div class="taskpane">
        <button aria-label="Resources"><svg class="i11"><use href="#home"/></svg></button>
        <button aria-label="Design library"><svg class="i11"><use href="#box"/></svg></button>
        <button aria-label="File explorer"><svg class="i11"><use href="#ofolder"/></svg></button>
        <button aria-label="View palette"><svg class="i11"><use href="#palette"/></svg></button>
        <button aria-label="Appearances"><svg class="i11"><use href="#ball"/></svg></button>
        <button aria-label="Custom properties"><svg class="i11"><use href="#list"/></svg></button>
        <button aria-label="SolidCAM"><svg class="i11"><use href="#cam"/></svg></button>
        <button aria-label="Forum"><svg class="i11"><use href="#forum"/></svg></button>
      </div>
    </section>
  </main>

  <footer class="bottom">
    <div class="nav"><button aria-label="First">|◂</button><button aria-label="Previous">◂</button><button aria-label="Next">▸</button><button aria-label="Last">▸|</button></div>
    <a href="#" class="on">Model</a>
    <a href="#">Motion Study 1</a>
  </footer>
</body>
</html>
```
FILE: styles.css
```css
* {
  box-sizing: border-box;
}
body {
  margin: 0;
  height: 100vh;
  display: flex;
  flex-direction: column;
  overflow: hidden;
  background: #fff;
  color: #222;
  font: 6px/7px "Open Sans", "Noto Sans", sans-serif;
}
button, input {
  font: inherit;
  color: inherit;
  margin: 0;
  padding: 0;
  border: 0;
  background: none;
}
button {
  display: flex;
  align-items: center;
  justify-content: center;
}
a {
  color: inherit;
  text-decoration: none;
}
svg {
  display: block;
  flex: none;
}
.defs {
  position: absolute;
  width: 0;
  height: 0;
}
.i8 { width: 8px; height: 8px; }
.i10 { width: 10px; height: 10px; }
.i11 { width: 11px; height: 11px; }
.flip { transform: scaleX(-1); }
.caret {
  border: 1px solid transparent;
  border-top: 2px solid #555;
}

/* title bar */
.titlebar {
  height: 19px;
  display: flex;
  align-items: center;
  background: #f7f7f7;
  border-top: 1px solid #ddd;
  border-bottom: 1px solid #ddd;
}
.brand {
  display: flex;
  align-items: center;
  gap: 3px;
  width: 76px;
  padding-left: 3px;
  color: #d8231f;
}
.brand-mark { width: 10px; height: 10px; }
.brand-name {
  font: italic 7px/8px "Open Sans", sans-serif;
}
.menu {
  display: flex;
  align-items: center;
  gap: 8px;
  width: 148px;
  height: 100%;
  border-right: 1px solid #ccc;
}
.quick {
  display: flex;
  height: 100%;
  padding-left: 10px;
}
.single { width: 16px; }
.split {
  width: 23px;
  gap: 4px;
}
.undo { color: #2f7396; }
.redo { color: #ccc; }
.redo .caret { border-top-color: #aaa; }
.quick .active {
  margin-right: 2px;
  background: linear-gradient(90deg, #b1b1b1 16px, #999 16px, #999 17px, #e8e8e8 17px);
}
.window-tools {
  margin-left: auto;
  display: flex;
  align-items: center;
  gap: 8px;
  padding-right: 5px;
}
.window-tools button:nth-of-type(n+3) { width: 11px; }
.search {
  display: flex;
  align-items: center;
  gap: 3px;
  width: 108px;
  height: 12px;
  padding: 0 3px;
  background: #fff;
  border: 1px solid #ccc;
}
.search input {
  flex: 1;
  min-width: 0;
  outline: 0;
}
.search input::placeholder { color: #555; }

/* ribbon */
.ribbon {
  height: 43px;
  display: flex;
  background: #f7f7f7;
}
.group {
  display: flex;
  padding: 3px 2px;
  border-right: 1px solid #ddd;
}
.cmd {
  flex-direction: column;
  justify-content: flex-start;
  text-align: center;
  padding: 0 2px;
}
.about { width: 30px; }
.browse { width: 22px; }
.files {
  display: grid;
  width: 41px;
  padding: 0 2px;
}
.files button {
  justify-content: flex-start;
  gap: 3px;
}
.files .caret { margin-left: 4px; }
.views {
  display: grid;
  grid-template-columns: repeat(4, 14px);
  width: 57px;
  padding: 0;
}
.solids {
  gap: 1px;
  padding-right: 4px;
}
.gcode {
  height: 11px;
  padding-top: 1px;
  font: bold 5px/5px "Liberation Mono", monospace;
}
.recog { border: 0; }
.recog .cmd { padding: 0 3px; }
.collapse {
  margin: auto 3px 3px auto;
}

/* command tabs */
.tabrow {
  display: flex;
  height: 13px;
  border-top: 1px solid #bbb;
}
.tabs { display: flex; }
.tabs a {
  padding: 2px 5px 0 4px;
  background: #d2d2d2;
  border-right: 1px solid #888;
  border-bottom: 1px solid #999;
  white-space: nowrap;
}
.tabs .on {
  background: #fff;
  border-bottom-color: #fff;
  font-weight: 600;
}
.doc-tools {
  display: flex;
  gap: 6px;
  margin-left: auto;
  padding: 2px 7px 0 0;
  color: #999;
}

/* left panel */
.work {
  flex: 1;
  min-height: 0;
  display: flex;
}
.panel {
  position: relative;
  width: 319px;
  display: flex;
  flex-direction: column;
  border-top: 1px solid #a9bbbb;
  border-right: 1px solid #aaa;
  background: #f7f7f7;
}
.grip {
  height: 9px;
  padding-top: 3px;
  border-bottom: 1px solid #ddd;
}
.grip i {
  display: block;
  width: 3px;
  height: 3px;
  margin: 0 auto;
  border-radius: 50%;
  background: #aaa;
}
.manager-tabs {
  display: flex;
  padding: 2px 1px 0;
  border-bottom: 1px solid #ccc;
}
.manager-tabs button {
  width: 21px;
  height: 14px;
  background: #d2d2d2;
  border: 1px solid #aaa;
  border-left: 0;
}
.manager-tabs .on {
  background: #f7f7f7;
  border-bottom-color: #f7f7f7;
}
.panel-tools {
  display: flex;
  align-items: center;
  gap: 4px;
  height: 20px;
  background: #f0f0f0;
}
.tree-wrap {
  flex: 1;
  min-height: 0;
  display: flex;
  border: 1px solid #ccc;
  border-right: 0;
  background: #fff;
}
.tree {
  flex: 1;
  display: grid;
  grid-auto-rows: 1fr;
  margin: 0;
  padding: 0;
  list-style: none;
  font: 6px/8px "DejaVu Sans Condensed", "Noto Sans", sans-serif;
}
.tree li, .tree label {
  display: flex;
  align-items: center;
  gap: 2px;
  min-height: 0;
  white-space: nowrap;
}
.tree li {
  background-repeat: no-repeat;
  background-image: linear-gradient(#ccc, #ccc), linear-gradient(#ccc, #ccc);
}
.root {
  padding-left: 4px;
  background-size: 1px 100%, 7px 1px;
  background-position: 7px 0, 7px 50%;
}
.tree .last { background-size: 1px 50%, 7px 1px; }
.setup {
  padding-left: 17px;
  background-size: 1px 50%, 7px 1px;
  background-position: 20px 0, 20px 50%;
}
.mac {
  padding-left: 30px;
  background-size: 1px 100%, 8px 1px;
  background-position: 33px 0, 33px 50%;
}
.tree .op {
  padding-left: 42px;
  background-image: linear-gradient(#ccc, #ccc), linear-gradient(#ccc, #ccc), linear-gradient(#ccc, #ccc);
  background-size: 1px 100%, 1px 100%, 8px 1px;
  background-position: 33px 0, 45px 0, 45px 50%;
}
.leg { width: 8px; }
.tog {
  width: 7px;
  height: 7px;
  margin-right: 1px;
  border: 1px solid #ccc;
  background: #f4f4f4;
  font: 6px/5px "Liberation Sans", sans-serif;
  color: #57a;
}
.tree input {
  appearance: none;
  width: 7px;
  height: 7px;
  border: 1px solid #555;
  background: #fff;
}
.folder-name { padding-left: 2px; }
.purple { color: #8a1fff; }
.scroll {
  width: 10px;
  background: #f0f0f0;
}
.scroll i {
  display: block;
  width: 2px;
  height: 45%;
  margin: 47px 0 0 4px;
  background: #999;
}
.splitter {
  position: absolute;
  right: -5px;
  top: 46%;
  z-index: 1;
  width: 6px;
  height: 20px;
  border: 1px solid #bbb;
  background: #f7f7f7;
}

/* graphics area */
.viewport {
  position: relative;
  flex: 1;
  min-width: 0;
}
.model {
  width: 100%;
  height: 100%;
}
.axis { font: bold 16px "Liberation Sans", sans-serif; }
.axis-sm { font: bold 5px "Liberation Sans", sans-serif; }
.hud {
  position: absolute;
  top: 2px;
  left: 0;
  right: 0;
  display: flex;
  justify-content: center;
  gap: 3px;
  padding-right: 2px;
}
.drop {
  width: 18px;
  gap: 4px;
  justify-content: flex-start;
}
.taskpane {
  position: absolute;
  top: 14px;
  right: 0;
  border: 1px solid #bbb;
  border-right: 0;
  background: #d8d8d8;
}
.taskpane button {
  width: 13px;
  height: 13px;
  border-bottom: 1px solid #bbb;
}

/* bottom tabs */
.bottom {
  display: flex;
  height: 12px;
  padding-top: 2px;
  border-top: 1px solid #aaa;
  background: #f0f0f0;
}
.bottom .nav {
  display: flex;
  width: 36px;
  background: #bbb;
  color: #888;
}
.bottom .nav button { flex: 1; }
.bottom a {
  padding: 1px 6px 0;
  background: #d2d2d2;
  border-right: 1px solid #999;
}
.bottom .on {
  background: #fff;
  font-weight: bold;
}
```
